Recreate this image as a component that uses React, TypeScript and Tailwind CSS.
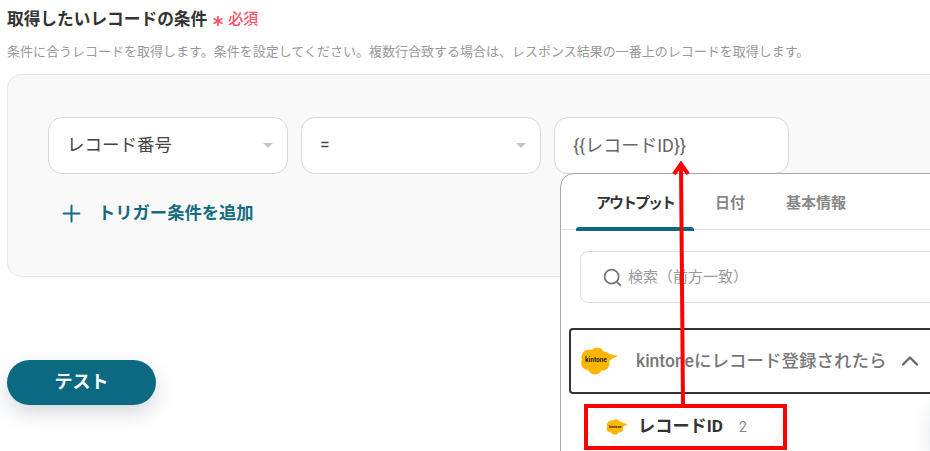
import React from 'react';
import { Asterisk, ChevronUp, Plus, Search } from 'lucide-react';

const jpFont = "font-['Roboto','Noto_Sans_CJK_JP',sans-serif]";

const KintoneLogo: React.FC<{ className?: string; label?: boolean }> = ({ className, label = true }) => (
  <svg viewBox="0 0 38 28" className={className}>
    <g fill="#fdb600">
      <circle cx="9" cy="10" r="7.500" />
      <circle cx="17" cy="8" r="7.500" />
      <circle cx="24" cy="11" r="6.500" />
      <circle cx="8" cy="16" r="7" />
      <circle cx="15" cy="20" r="7.500" />
      <circle cx="23" cy="17" r="6.500" />
      <path d="M26 6 L38 9 L28 14 Z" />
    </g>
    {label && (
      <text x="16" y="15" textAnchor="middle" fontSize="6.500" fontWeight="700" fill="#222" fontFamily="Roboto, sans-serif">
        kintone
      </text>
    )}
  </svg>
);

const SelectField: React.FC<{ label: string; className: string }> = ({ label, className }) => (
  <div className={`flex h-[57px] items-center justify-between rounded-[14px] border border-[#d8d8d8] bg-white pl-[18px] pr-[14px] ${className}`}>
    <span className="text-[17.5px] text-[#444]">{label}</span>
    <span className="h-0 w-0 border-x-[5px] border-t-[5px] border-x-transparent border-t-[#c4c4c4]" />
  </div>
);

const OutputPopup: React.FC = () => (
  <div className="absolute left-[560px] top-[173px] h-[300px] w-[400px] rounded-tl-[14px] border border-[#a8a8a8] bg-white">
    {/* Tabs */}
    <div className="flex h-[56px] items-center gap-[41px] border-b border-[#e2e2e2] pl-[35px] pr-4 pt-[4px] text-[15px] font-bold text-[#888]">
      <span className="relative tracking-[-2px] text-[#333]">
        アウトプット
        <span className="absolute -bottom-[16px] -left-[20px] -right-[20px] h-[4px] rounded-t-[3px] bg-[#0b6a82]" />
      </span>
      <span>日付</span>
      <span>基本情報</span>
    </div>

    <div className="pl-[19px] pt-[21px]">
      <div className="flex h-[52px] items-center gap-[5px] rounded-[8px] border border-[#dedede] pl-[21px]">
        <Search className="h-[21px] w-[21px] text-[#777]" strokeWidth={2} />
        <span className="text-[15px] text-[#999]">検索（前方一致）</span>
      </div>
    </div>

    {/* Trigger group */}
    <div className="ml-[8px] mt-[25px] flex h-[66px] items-center rounded-[4px] border-2 border-[#333] pl-[9px]">
      <KintoneLogo className="h-[28px] w-[38px] shrink-0" />
      <span className="ml-[18px] whitespace-nowrap text-[17.5px] font-medium text-[#777]">kintoneにレコード登録されたら</span>
      <ChevronUp className="ml-[9px] h-[28px] w-[28px] shrink-0 text-[#666]" strokeWidth={2} />
    </div>

    <div className="ml-[29px] mt-[13px] flex h-[40px] w-[190px] items-center rounded-full bg-white pl-[16px] shadow-[0_0_8px_rgba(0,0,0,0.08)]">
      <KintoneLogo className="h-[16px] w-[22px] shrink-0" />
      <span className="ml-[10px] text-[17.2px] font-bold text-[#333]">レコードID</span>
      <span className="ml-[16px] text-[14px] text-[#888]">2</span>
    </div>
  </div>
);

export default function App() {
  return (
    <div className={`relative h-[451px] w-[930px] overflow-hidden bg-white ${jpFont}`}>
      <div className="pl-[7px] pt-[9px]">
        <div className="flex h-[21px] items-center">
          <h2 className="text-[16.7px] font-bold text-[#333]">取得したいレコードの条件</h2>
          <span className="ml-[2px] flex items-center text-[15px] font-medium text-[#ff4d67]">
            <Asterisk className="mt-[3px] h-[18px] w-[18px]" strokeWidth={2.2} />
            <span className="ml-[1px]">必須</span>
          </span>
        </div>
        <p className="mt-[13px] h-[18px] whitespace-nowrap text-[13px] leading-[18px] text-[#999]">
          条件に合うレコードを取得します。条件を設定してください。複数行合致する場合は、レスポンス結果の一番上のレコードを取得します。
        </p>

        {/* Condition panel */}
        <div className="mt-[13px] h-[203px] w-[960px] rounded-[14px] border border-[#e8e8e8] bg-[#f9f9f9] pl-[40px] pt-[42px]">
          <div className="flex gap-[13px]">
            <SelectField label="レコード番号" className="w-[240px]" />
            <SelectField label="=" className="w-[240px]" />
            <div className="flex h-[57px] w-[235px] items-center rounded-[14px] border border-[#d8d8d8] bg-white pl-[18px] text-[18px] text-[#666]">
              {'{{レコードID}}'}
            </div>
          </div>
          <button className="ml-[10px] mt-[26px] flex items-center gap-[13px] text-[17.3px] font-bold text-[#156b80]">
            <Plus className="h-[27px] w-[27px]" strokeWidth={1.8} />
            トリガー条件を追加
          </button>
        </div>

        <button className="mt-[83px] h-[45px] w-[149px] rounded-full bg-[#0b6a82] pb-[2px] text-[18px] font-bold text-white shadow-[0_8px_20px_rgba(40,60,80,0.2)]">
          テスト
        </button>
      </div>

      <OutputPopup />

      {/* faint shadow of something off screen */}
      <div className="absolute left-[935px] top-[405px] h-[60px] w-[40px] rounded-full bg-white shadow-[0_0_24px_rgba(40,60,80,0.2)]" />

      {/* Red annotation: box and arrow */}
      <div className="absolute left-[584px] top-[404px] h-[46px] w-[203px] border-4 border-[#ff0000]" />
      <svg className="absolute left-[660px] top-[155px] h-[255px] w-[40px]" viewBox="0 0 40 255">
        <path d="M23 250 L21 8" stroke="#ff0000" strokeWidth="4" fill="none" />
        <path d="M14 19 L21 9 L28 19" stroke="#ff0000" strokeWidth="4" fill="none" />
      </svg>
    </div>
  );
}
